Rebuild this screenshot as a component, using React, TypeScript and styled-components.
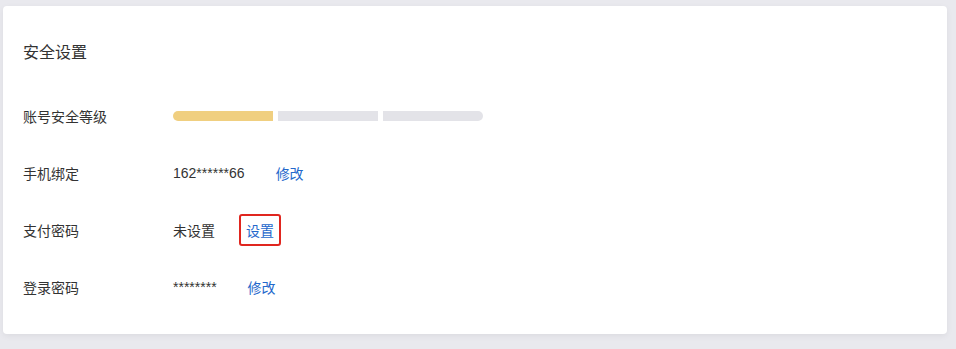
import styled, { createGlobalStyle } from "styled-components";

const GlobalStyle = createGlobalStyle`
  body {
    margin: 0;
    background: #e9e9ee;
    font-family: "Liberation Sans", "Noto Sans CJK SC", sans-serif;
    color: #333;
  }
`;

const Page = styled.div`
  padding: 6px 9px 15px 3px;
`;

const Card = styled.div`
  background: #fff;
  border-radius: 4px;
  box-shadow: 0 2px 6px rgba(0, 0, 0, 0.06);
  padding: 35px 20px 19px;
`;

const Title = styled.div`
  font-size: 16px;
  line-height: 24px;
  color: #333;
  margin-bottom: 22px;
`;

const Row = styled.div`
  display: flex;
  align-items: center;
  height: 57px;
  font-size: 14px;
`;

const Label = styled.div`
  width: 150px;
  flex-shrink: 0;
  color: #333;
`;

const Value = styled.span`
  color: #333;
`;

const Link = styled.a<{ $boxed?: boolean }>`
  color: #2468cc;
  cursor: pointer;
  margin-left: ${(p) => (p.$boxed ? "24px" : "31px")};
  ${(p) =>
    p.$boxed &&
    `
    padding: 4px 5px;
    border: 2px solid #e0261f;
    border-radius: 3px;
  `}
`;

const Meter = styled.div`
  display: flex;
  gap: 5px;
`;

const Segment = styled.div<{ $on?: boolean; $pos: "first" | "mid" | "last" }>`
  width: 100px;
  height: 10px;
  background: ${(p) => (p.$on ? "#f0cf80" : "#e3e3e8")};
  border-radius: ${(p) =>
    p.$pos === "first" ? "5px 0 0 5px" : p.$pos === "last" ? "0 5px 5px 0" : "0"};
`;

export default function App() {
  return (
    <>
      <GlobalStyle />
      <Page>
        <Card>
          <Title>安全设置</Title>
          <Row>
            <Label>账号安全等级</Label>
            <Meter>
              <Segment $on $pos="first" />
              <Segment $pos="mid" />
              <Segment $pos="last" />
            </Meter>
          </Row>
          <Row>
            <Label>手机绑定</Label>
            <Value>162******66</Value>
            <Link>修改</Link>
          </Row>
          <Row>
            <Label>支付密码</Label>
            <Value>未设置</Value>
            <Link $boxed>设置</Link>
          </Row>
          <Row>
            <Label>登录密码</Label>
            <Value>********</Value>
            <Link>修改</Link>
          </Row>
        </Card>
      </Page>
    </>
  );
}
